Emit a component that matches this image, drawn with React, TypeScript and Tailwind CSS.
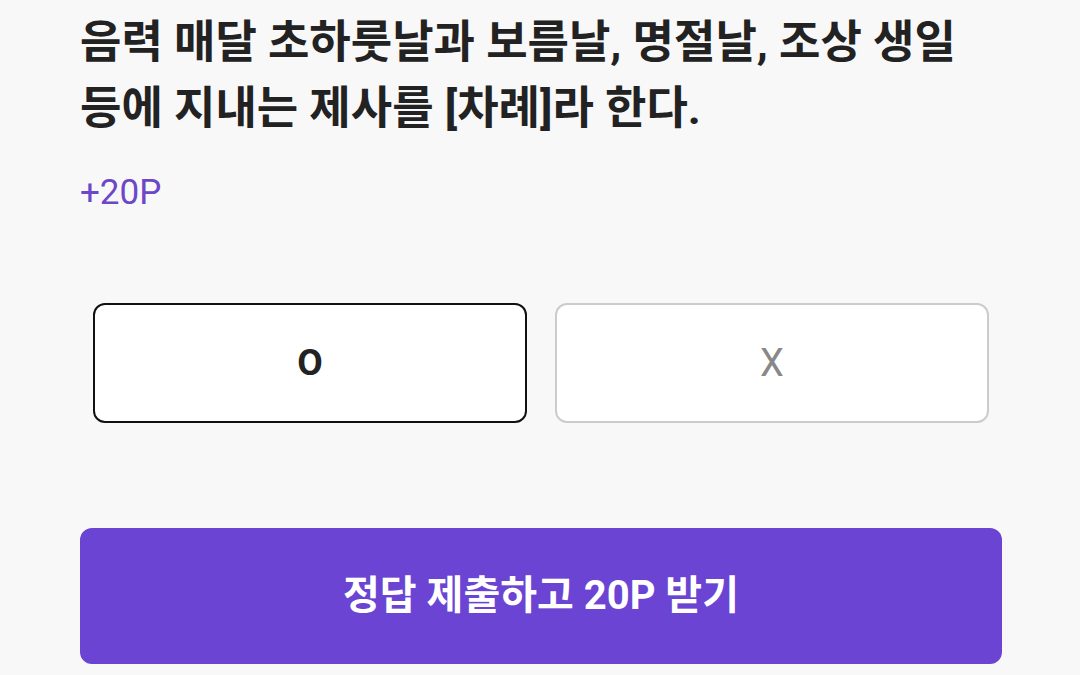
export default function App() {
  return (
    <div
      className="w-[1080px] h-[675px] overflow-hidden bg-[#f8f8f8] pl-[80px] pr-[78px] pt-[10px] flex flex-col"
      style={{ fontFamily: '"Roboto", "Noto Sans CJK KR", sans-serif' }}
    >
      <h1 className="text-[45px] leading-[66px] font-bold text-[#222222] whitespace-nowrap">
        음력 매달 초하룻날과 보름날, 명절날, 조상 생일
        <br />
        등에 지내는 제사를 [차례]라 한다.
      </h1>

      <p className="mt-[31px] text-[35px] leading-[40px] text-[#6c47c8]">+20P</p>

      <div className="mt-[90px] px-[13px] grid grid-cols-2 gap-[28px]">
        <button className="h-[120px] rounded-[12px] border-2 border-[#111111] bg-white flex items-center justify-center text-[37px] font-bold text-[#222222]">
          O
        </button>
        <button className="h-[120px] rounded-[12px] border-2 border-[#cccccc] bg-white flex items-center justify-center text-[38px] text-[#888888]">
          X
        </button>
      </div>

      <button className="mt-[105px] h-[136px] rounded-[12px] bg-[#6b44d3] flex items-center justify-center text-[40px] font-bold text-white">
        정답 제출하고 20P 받기
      </button>
    </div>
  );
}
